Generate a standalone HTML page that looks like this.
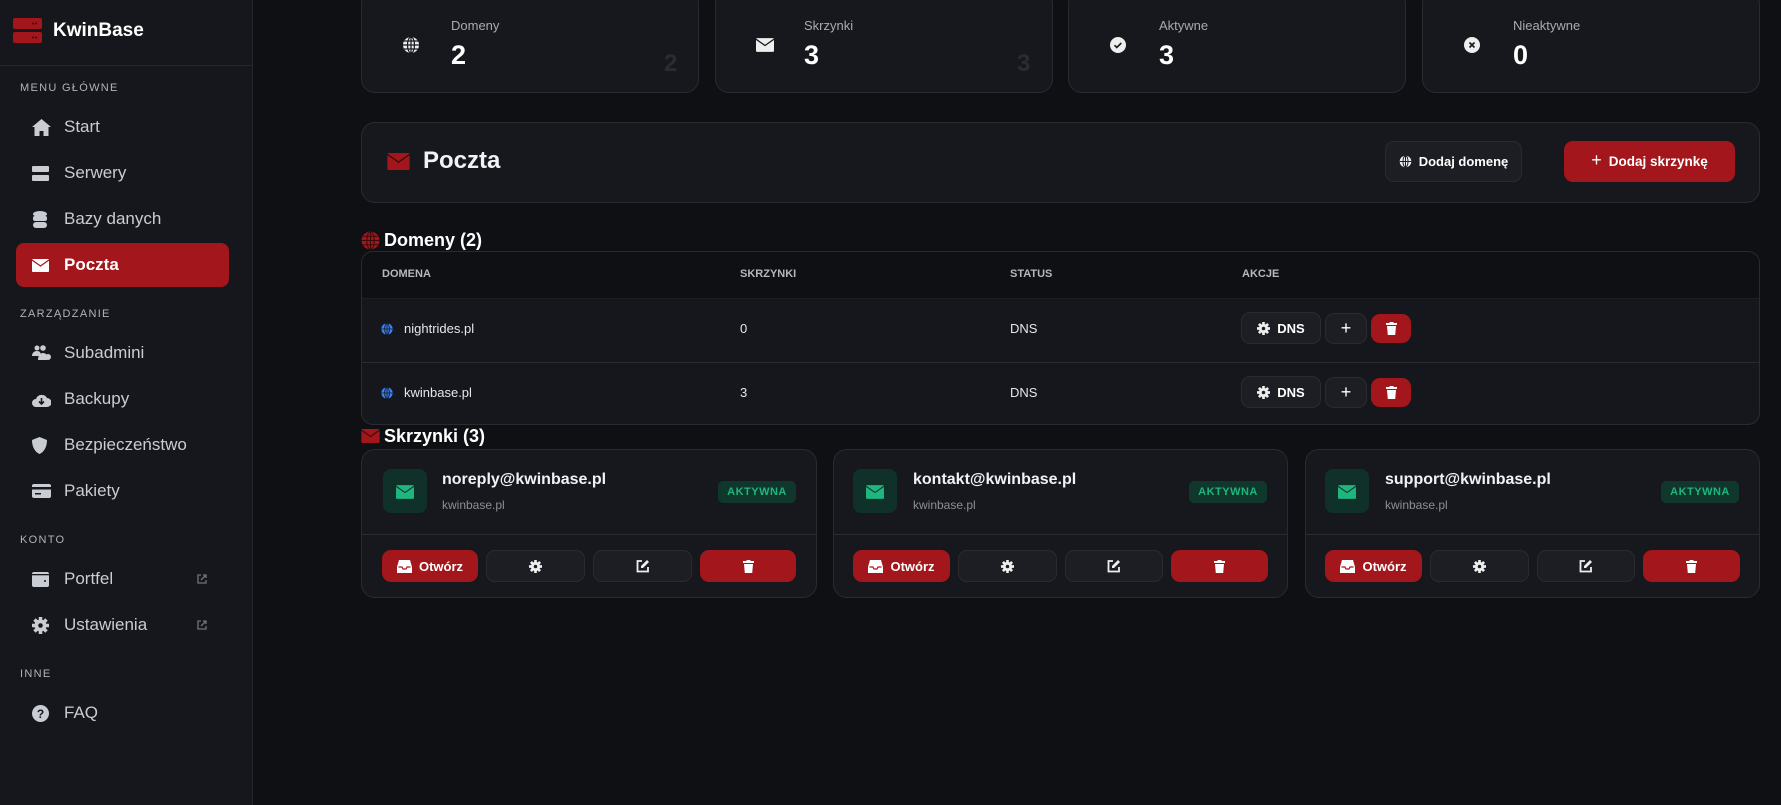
<!DOCTYPE html>
<html><head><meta charset="utf-8"><style>
*{box-sizing:border-box;margin:0;padding:0}
body{width:1781px;height:805px;background:#0f1014;font-family:"Liberation Sans",sans-serif;color:#e6e7ea;position:relative;overflow:hidden}
.abs{position:absolute}
.side{left:0;top:0;width:253px;height:805px;background:#16171c;border-right:1px solid #26272d}
.logo{left:0;top:0;width:252px;height:66px;border-bottom:1px solid #26272d}
.sec{left:20px;font-size:11px;letter-spacing:1.3px;color:#b0b3ba;font-weight:400}
.item{left:16px;width:213px;height:44px;border-radius:8px;display:flex;align-items:center;font-size:17px;color:#c9ccd2}
.item svg{position:absolute;left:16px}
.item span{position:absolute;left:48px}
.item.act{background:#a3161b;color:#fff;font-weight:600}
.card{background:#17181d;border:1px solid #2a2b31;border-radius:14px}
.lbl{font-size:13px;color:#a7aab2}
.val{font-size:27px;font-weight:700;color:#fff}
.ghost{font-size:24px;font-weight:700;color:#2a2c33}
.btn{border-radius:9px;display:flex;align-items:center;justify-content:center;gap:7px;font-size:13px;font-weight:700;color:#fff}
.dk{background:#1c1e24;border:1px solid #2a2b31}
.rd{background:#a3161b}
.th{font-size:11px;font-weight:700;color:#b5b8bf;top:268px}
.td{font-size:13px;color:#e6e7ea}
.em{font-size:16px;font-weight:700;color:#f1f2f4}
.dm{font-size:12px;color:#8b8e96}
.badge{background:#10372b;color:#1fb57f;font-size:11px;font-weight:700;letter-spacing:.5px;border-radius:5px;display:flex;align-items:center;justify-content:center}
</style></head><body>

<div class="abs side"></div>
<div class="abs logo"></div>
<svg class="abs" style="left:13px;top:18px" width="29" height="25" viewBox="0 0 29 25"><rect x="0" y="0" width="29" height="11" rx="2" fill="#a3161b"/><rect x="0" y="14" width="29" height="11" rx="2" fill="#a3161b"/><circle cx="20" cy="5.5" r="1" fill="#3a0b0d"/><circle cx="23" cy="5.5" r="1" fill="#3a0b0d"/><circle cx="20" cy="19.5" r="1" fill="#3a0b0d"/><circle cx="23" cy="19.5" r="1" fill="#3a0b0d"/></svg>
<div class="abs" style="left:53px;top:20px;font-size:19px;font-weight:700;color:#fff">KwinBase</div>

<div class="abs sec" style="top:82px">MENU GŁÓWNE</div>
<div class="abs item" style="top:105px"><svg width="19" height="17" viewBox="0 0 19 17"><path d="M9.5 0L0 8h2.5v9h5v-5h4v5h5V8H19z" fill="#c9ccd2"/></svg><span>Start</span></div>
<div class="abs item" style="top:151px"><svg width="17" height="15" viewBox="0 0 17 15"><rect y="0" width="17" height="6" rx="1" fill="#c9ccd2"/><rect y="9" width="17" height="6" rx="1" fill="#c9ccd2"/></svg><span>Serwery</span></div>
<div class="abs item" style="top:197px"><svg width="16" height="17" viewBox="0 0 16 17"><ellipse cx="8" cy="3" rx="7" ry="3" fill="#c9ccd2"/><rect x="1" y="5" width="14" height="5" rx="2" fill="#c9ccd2"/><rect x="1" y="11" width="14" height="6" rx="3" fill="#c9ccd2"/></svg><span>Bazy danych</span></div>
<div class="abs item act" style="top:243px"><svg width="17" height="13" viewBox="0 0 17 13"><rect width="17" height="13" rx="1" fill="#fff"/><path d="M0 1l8.5 6L17 1" stroke="#a3161b" stroke-width="1.3" fill="none"/></svg><span>Poczta</span></div>

<div class="abs sec" style="top:308px">ZARZĄDZANIE</div>
<div class="abs item" style="top:331px"><svg width="20" height="16" viewBox="0 0 20 16"><circle cx="5" cy="3" r="2.5" fill="#c9ccd2"/><circle cx="11" cy="3" r="2.8" fill="#c9ccd2"/><path d="M0 11c0-3 2-5 5-5s4 2 4 5zM6 15c0-4 2-7 5-7s4 2 4 4v3z" fill="#c9ccd2"/><circle cx="16" cy="12" r="3" fill="#c9ccd2"/></svg><span>Subadmini</span></div>
<div class="abs item" style="top:377px"><svg width="19" height="15" viewBox="0 0 19 15"><path d="M4 15a4 4 0 010-8 6 6 0 0111-1 4.5 4.5 0 010 9z" fill="#c9ccd2"/><path d="M9.5 6v6M7 9.5l2.5 2.5 2.5-2.5" stroke="#16171c" stroke-width="1.6" fill="none"/></svg><span>Backupy</span></div>
<div class="abs item" style="top:423px"><svg width="15" height="17" viewBox="0 0 15 17"><path d="M7.5 0L15 3c0 7-3 12-7.5 14C3 15 0 10 0 3z" fill="#c9ccd2"/></svg><span>Bezpieczeństwo</span></div>
<div class="abs item" style="top:469px"><svg width="19" height="14" viewBox="0 0 19 14"><rect width="19" height="14" rx="2" fill="#c9ccd2"/><rect y="3" width="19" height="2.5" fill="#16171c"/><rect x="3" y="9" width="6" height="1.5" fill="#16171c"/></svg><span>Pakiety</span></div>

<div class="abs sec" style="top:534px">KONTO</div>
<div class="abs item" style="top:557px"><svg width="17" height="15" viewBox="0 0 17 15"><rect width="17" height="15" rx="2" fill="#c9ccd2"/><rect x="0" y="2" width="17" height="1.3" fill="#16171c"/><circle cx="13" cy="9" r="1" fill="#16171c"/></svg><span>Portfel</span><svg style="left:181px" width="10" height="10" viewBox="0 0 10 10"><path d="M4 1H1v8h8V6M6 1h3v3M9 1L4 6" stroke="#6f737b" stroke-width="1.3" fill="none"/></svg></div>
<div class="abs item" style="top:603px"><svg width="17" height="17" viewBox="0 0 17 17"><circle cx="8.5" cy="8.5" r="6" fill="#c9ccd2"/><g stroke="#c9ccd2" stroke-width="3.5"><path d="M8.5 0v17M0 8.5h17M2.5 2.5l12 12M14.5 2.5l-12 12"/></g><circle cx="8.5" cy="8.5" r="2.3" fill="#16171c"/></svg><span>Ustawienia</span><svg style="left:181px" width="10" height="10" viewBox="0 0 10 10"><path d="M4 1H1v8h8V6M6 1h3v3M9 1L4 6" stroke="#6f737b" stroke-width="1.3" fill="none"/></svg></div>

<div class="abs sec" style="top:668px">INNE</div>
<div class="abs item" style="top:691px"><svg width="17" height="17" viewBox="0 0 17 17"><circle cx="8.5" cy="8.5" r="8.5" fill="#c9ccd2"/><text x="8.5" y="13" font-size="12" font-weight="700" text-anchor="middle" fill="#16171c" font-family="Liberation Sans">?</text></svg><span>FAQ</span></div>

<!-- stat cards -->
<div class="abs card" style="left:361px;top:-10px;width:338px;height:103px"></div>
<div class="abs card" style="left:715px;top:-10px;width:338px;height:103px"></div>
<div class="abs card" style="left:1068px;top:-10px;width:338px;height:103px"></div>
<div class="abs card" style="left:1422px;top:-10px;width:338px;height:103px"></div>

<svg class="abs" style="left:402px;top:36px" width="18" height="18" viewBox="0 0 18 18"><circle cx="9" cy="9" r="8" fill="#eee"/><g stroke="#17181d" stroke-width="1.2" fill="none"><ellipse cx="9" cy="9" rx="3.5" ry="8"/><path d="M1 9h16M2 5h14M2 13h14M9 1v16"/></g></svg>
<div class="abs lbl" style="left:451px;top:18px">Domeny</div>
<div class="abs val" style="left:451px;top:40px">2</div>
<div class="abs ghost" style="left:664px;top:50px">2</div>

<svg class="abs" style="left:756px;top:38px" width="18" height="14" viewBox="0 0 17 13"><rect width="17" height="13" rx="1" fill="#eee"/><path d="M0 1l8.5 6L17 1" stroke="#17181d" stroke-width="1.2" fill="none"/></svg>
<div class="abs lbl" style="left:804px;top:18px">Skrzynki</div>
<div class="abs val" style="left:804px;top:40px">3</div>
<div class="abs ghost" style="left:1017px;top:50px">3</div>

<svg class="abs" style="left:1109px;top:36px" width="18" height="18" viewBox="0 0 18 18"><circle cx="9" cy="9" r="8" fill="#eee"/><path d="M5.5 9.2l2.3 2.3 4.5-4.5" stroke="#17181d" stroke-width="1.6" fill="none"/></svg>
<div class="abs lbl" style="left:1159px;top:18px">Aktywne</div>
<div class="abs val" style="left:1159px;top:40px">3</div>

<svg class="abs" style="left:1463px;top:36px" width="18" height="18" viewBox="0 0 18 18"><circle cx="9" cy="9" r="8" fill="#eee"/><path d="M6.5 6.5l5 5M11.5 6.5l-5 5" stroke="#17181d" stroke-width="1.6"/></svg>
<div class="abs lbl" style="left:1513px;top:18px">Nieaktywne</div>
<div class="abs val" style="left:1513px;top:40px">0</div>

<!-- Poczta header -->
<div class="abs card" style="left:361px;top:122px;width:1399px;height:81px"></div>
<svg class="abs" style="left:387px;top:153px" width="23" height="17" viewBox="0 0 17 13"><rect width="17" height="13" rx="1" fill="#a3161b"/><path d="M0 1l8.5 6L17 1" stroke="#3a0b0d" stroke-width="1" fill="none"/></svg>
<div class="abs" style="left:423px;top:147px;font-size:24px;font-weight:700;color:#f1f2f4">Poczta</div>
<div class="abs btn dk" style="left:1385px;top:141px;width:137px;height:41px"><svg width="13" height="13" viewBox="0 0 18 18"><circle cx="9" cy="9" r="8" fill="#eee"/><g stroke="#1c1e24" stroke-width="1.4" fill="none"><ellipse cx="9" cy="9" rx="3.5" ry="8"/><path d="M1 9h16M9 1v16"/></g></svg>Dodaj domenę</div>
<div class="abs btn rd" style="left:1564px;top:141px;width:171px;height:41px;font-size:13.5px"><span style="font-size:18px;font-weight:400;margin-top:-2px">+</span>Dodaj skrzynkę</div>

<!-- Domeny -->
<svg class="abs" style="left:361px;top:231px" width="19" height="19" viewBox="0 0 18 18"><circle cx="9" cy="9" r="8.5" fill="#a3161b"/><g stroke="#3a0b0d" stroke-width="1" fill="none"><ellipse cx="9" cy="9" rx="3.5" ry="8.5"/><path d="M0.5 9h17M2 5h14M2 13h14M9 0.5v17"/></g></svg>
<div class="abs" style="left:384px;top:230px;font-size:18px;font-weight:700;color:#fff">Domeny (2)</div>

<div class="abs" style="left:361px;top:251px;width:1399px;height:174px;border:1px solid #2a2b31;border-radius:12px;background:#16171c;overflow:hidden">
 <div style="height:47px;background:#0f1014;border-bottom:1px solid #1e1f24"></div>
 <div style="position:absolute;top:110px;left:0;right:0;height:1px;background:#2a2b31"></div>
</div>
<div class="abs th" style="left:382px">DOMENA</div>
<div class="abs th" style="left:740px">SKRZYNKI</div>
<div class="abs th" style="left:1010px">STATUS</div>
<div class="abs th" style="left:1242px">AKCJE</div>

<svg class="abs" style="left:381px;top:323px" width="12" height="12" viewBox="0 0 18 18"><circle cx="9" cy="9" r="8.5" fill="#3b82f6"/><g stroke="#16171c" stroke-width="1.3" fill="none"><ellipse cx="9" cy="9" rx="3.5" ry="8.5"/><path d="M0.5 9h17M9 0.5v17"/></g></svg>
<div class="abs td" style="left:404px;top:321px">nightrides.pl</div>
<div class="abs td" style="left:740px;top:321px">0</div>
<div class="abs td" style="left:1010px;top:321px">DNS</div>
<svg class="abs" style="left:381px;top:387px" width="12" height="12" viewBox="0 0 18 18"><circle cx="9" cy="9" r="8.5" fill="#3b82f6"/><g stroke="#16171c" stroke-width="1.3" fill="none"><ellipse cx="9" cy="9" rx="3.5" ry="8.5"/><path d="M0.5 9h17M9 0.5v17"/></g></svg>
<div class="abs td" style="left:404px;top:385px">kwinbase.pl</div>
<div class="abs td" style="left:740px;top:385px">3</div>
<div class="abs td" style="left:1010px;top:385px">DNS</div>

<div class="abs btn dk" style="left:1241px;top:312px;width:80px;height:32px"><svg width="13" height="13" viewBox="0 0 17 17"><circle cx="8.5" cy="8.5" r="6" fill="#eee"/><g stroke="#eee" stroke-width="3.5"><path d="M8.5 0v17M0 8.5h17M2.5 2.5l12 12M14.5 2.5l-12 12"/></g><circle cx="8.5" cy="8.5" r="2.3" fill="#1c1e24"/></svg>DNS</div>
<div class="abs btn dk" style="left:1325px;top:313px;width:42px;height:31px;font-size:18px;font-weight:400">+</div>
<div class="abs btn rd" style="left:1371px;top:314px;width:40px;height:29px"><svg width="11" height="13" viewBox="0 0 11 13"><rect x="0" y="1" width="11" height="2" fill="#fff"/><rect x="3.5" y="0" width="4" height="1.5" fill="#fff"/><path d="M1 4h9l-.8 9H1.8z" fill="#fff"/></svg></div>

<div class="abs btn dk" style="left:1241px;top:376px;width:80px;height:32px"><svg width="13" height="13" viewBox="0 0 17 17"><circle cx="8.5" cy="8.5" r="6" fill="#eee"/><g stroke="#eee" stroke-width="3.5"><path d="M8.5 0v17M0 8.5h17M2.5 2.5l12 12M14.5 2.5l-12 12"/></g><circle cx="8.5" cy="8.5" r="2.3" fill="#1c1e24"/></svg>DNS</div>
<div class="abs btn dk" style="left:1325px;top:377px;width:42px;height:31px;font-size:18px;font-weight:400">+</div>
<div class="abs btn rd" style="left:1371px;top:378px;width:40px;height:29px"><svg width="11" height="13" viewBox="0 0 11 13"><rect x="0" y="1" width="11" height="2" fill="#fff"/><rect x="3.5" y="0" width="4" height="1.5" fill="#fff"/><path d="M1 4h9l-.8 9H1.8z" fill="#fff"/></svg></div>

<!-- Skrzynki -->
<svg class="abs" style="left:361px;top:429px" width="19" height="14" viewBox="0 0 17 13"><rect width="17" height="13" rx="1" fill="#a3161b"/><path d="M0 1l8.5 6L17 1" stroke="#3a0b0d" stroke-width="1" fill="none"/></svg>
<div class="abs" style="left:384px;top:426px;font-size:18px;font-weight:700;color:#fff">Skrzynki (3)</div>

<div class="abs card" style="left:361px;top:449px;width:456px;height:149px"></div>
<div class="abs card" style="left:833px;top:449px;width:455px;height:149px"></div>
<div class="abs card" style="left:1305px;top:449px;width:455px;height:149px"></div>
<div class="abs" style="left:362px;top:534px;width:454px;height:1px;background:#2a2b31"></div>
<div class="abs" style="left:834px;top:534px;width:453px;height:1px;background:#2a2b31"></div>
<div class="abs" style="left:1306px;top:534px;width:453px;height:1px;background:#2a2b31"></div>

<!-- card 1 -->
<div class="abs" style="left:383px;top:469px;width:44px;height:44px;border-radius:8px;background:#10302a"></div>
<svg class="abs" style="left:396px;top:485px" width="18" height="14" viewBox="0 0 17 13"><rect width="17" height="13" rx="1" fill="#1fb57f"/><path d="M0 1l8.5 6L17 1" stroke="#10302a" stroke-width="1" fill="none"/></svg>
<div class="abs em" style="left:442px;top:471px">noreply@kwinbase.pl</div>
<div class="abs dm" style="left:442px;top:498px">kwinbase.pl</div>
<div class="abs badge" style="left:718px;top:481px;width:78px;height:22px">AKTYWNA</div>
<div class="abs btn rd" style="left:382px;top:550px;width:96px;height:32px"><svg width="15" height="13" viewBox="0 0 15 13"><path d="M2 0h11l2 7v6H0V7z" fill="#fff"/><path d="M1.5 7h3.5l1 2h3l1-2h3.5" stroke="#a3161b" stroke-width="1.2" fill="none"/></svg>Otwórz</div>
<div class="abs btn dk" style="left:486px;top:550px;width:99px;height:32px"><svg width="13" height="13" viewBox="0 0 17 17"><circle cx="8.5" cy="8.5" r="6" fill="#eee"/><g stroke="#eee" stroke-width="3.5"><path d="M8.5 0v17M0 8.5h17M2.5 2.5l12 12M14.5 2.5l-12 12"/></g><circle cx="8.5" cy="8.5" r="2.3" fill="#1c1e24"/></svg></div>
<div class="abs btn dk" style="left:593px;top:550px;width:99px;height:32px"><svg width="14" height="14" viewBox="0 0 14 14"><path d="M6 2H1.5v10.5H12V8" stroke="#eee" stroke-width="1.8" fill="none"/><path d="M11 1l2 2-6 6H5V7z" fill="#eee"/></svg></div>
<div class="abs btn rd" style="left:700px;top:550px;width:96px;height:32px"><svg width="11" height="13" viewBox="0 0 11 13"><rect x="0" y="1" width="11" height="2" fill="#fff"/><rect x="3.5" y="0" width="4" height="1.5" fill="#fff"/><path d="M1 4h9l-.8 9H1.8z" fill="#fff"/></svg></div>

<!-- card 2 -->
<div class="abs" style="left:853px;top:469px;width:44px;height:44px;border-radius:8px;background:#10302a"></div>
<svg class="abs" style="left:866px;top:485px" width="18" height="14" viewBox="0 0 17 13"><rect width="17" height="13" rx="1" fill="#1fb57f"/><path d="M0 1l8.5 6L17 1" stroke="#10302a" stroke-width="1" fill="none"/></svg>
<div class="abs em" style="left:913px;top:471px">kontakt@kwinbase.pl</div>
<div class="abs dm" style="left:913px;top:498px">kwinbase.pl</div>
<div class="abs badge" style="left:1189px;top:481px;width:78px;height:22px">AKTYWNA</div>
<div class="abs btn rd" style="left:853px;top:550px;width:97px;height:32px"><svg width="15" height="13" viewBox="0 0 15 13"><path d="M2 0h11l2 7v6H0V7z" fill="#fff"/><path d="M1.5 7h3.5l1 2h3l1-2h3.5" stroke="#a3161b" stroke-width="1.2" fill="none"/></svg>Otwórz</div>
<div class="abs btn dk" style="left:958px;top:550px;width:99px;height:32px"><svg width="13" height="13" viewBox="0 0 17 17"><circle cx="8.5" cy="8.5" r="6" fill="#eee"/><g stroke="#eee" stroke-width="3.5"><path d="M8.5 0v17M0 8.5h17M2.5 2.5l12 12M14.5 2.5l-12 12"/></g><circle cx="8.5" cy="8.5" r="2.3" fill="#1c1e24"/></svg></div>
<div class="abs btn dk" style="left:1065px;top:550px;width:98px;height:32px"><svg width="14" height="14" viewBox="0 0 14 14"><path d="M6 2H1.5v10.5H12V8" stroke="#eee" stroke-width="1.8" fill="none"/><path d="M11 1l2 2-6 6H5V7z" fill="#eee"/></svg></div>
<div class="abs btn rd" style="left:1171px;top:550px;width:97px;height:32px"><svg width="11" height="13" viewBox="0 0 11 13"><rect x="0" y="1" width="11" height="2" fill="#fff"/><rect x="3.5" y="0" width="4" height="1.5" fill="#fff"/><path d="M1 4h9l-.8 9H1.8z" fill="#fff"/></svg></div>

<!-- card 3 -->
<div class="abs" style="left:1325px;top:469px;width:44px;height:44px;border-radius:8px;background:#10302a"></div>
<svg class="abs" style="left:1338px;top:485px" width="18" height="14" viewBox="0 0 17 13"><rect width="17" height="13" rx="1" fill="#1fb57f"/><path d="M0 1l8.5 6L17 1" stroke="#10302a" stroke-width="1" fill="none"/></svg>
<div class="abs em" style="left:1385px;top:471px">support@kwinbase.pl</div>
<div class="abs dm" style="left:1385px;top:498px">kwinbase.pl</div>
<div class="abs badge" style="left:1661px;top:481px;width:78px;height:22px">AKTYWNA</div>
<div class="abs btn rd" style="left:1325px;top:550px;width:97px;height:32px"><svg width="15" height="13" viewBox="0 0 15 13"><path d="M2 0h11l2 7v6H0V7z" fill="#fff"/><path d="M1.5 7h3.5l1 2h3l1-2h3.5" stroke="#a3161b" stroke-width="1.2" fill="none"/></svg>Otwórz</div>
<div class="abs btn dk" style="left:1430px;top:550px;width:99px;height:32px"><svg width="13" height="13" viewBox="0 0 17 17"><circle cx="8.5" cy="8.5" r="6" fill="#eee"/><g stroke="#eee" stroke-width="3.5"><path d="M8.5 0v17M0 8.5h17M2.5 2.5l12 12M14.5 2.5l-12 12"/></g><circle cx="8.5" cy="8.5" r="2.3" fill="#1c1e24"/></svg></div>
<div class="abs btn dk" style="left:1537px;top:550px;width:98px;height:32px"><svg width="14" height="14" viewBox="0 0 14 14"><path d="M6 2H1.5v10.5H12V8" stroke="#eee" stroke-width="1.8" fill="none"/><path d="M11 1l2 2-6 6H5V7z" fill="#eee"/></svg></div>
<div class="abs btn rd" style="left:1643px;top:550px;width:97px;height:32px"><svg width="11" height="13" viewBox="0 0 11 13"><rect x="0" y="1" width="11" height="2" fill="#fff"/><rect x="3.5" y="0" width="4" height="1.5" fill="#fff"/><path d="M1 4h9l-.8 9H1.8z" fill="#fff"/></svg></div>

</body></html>
